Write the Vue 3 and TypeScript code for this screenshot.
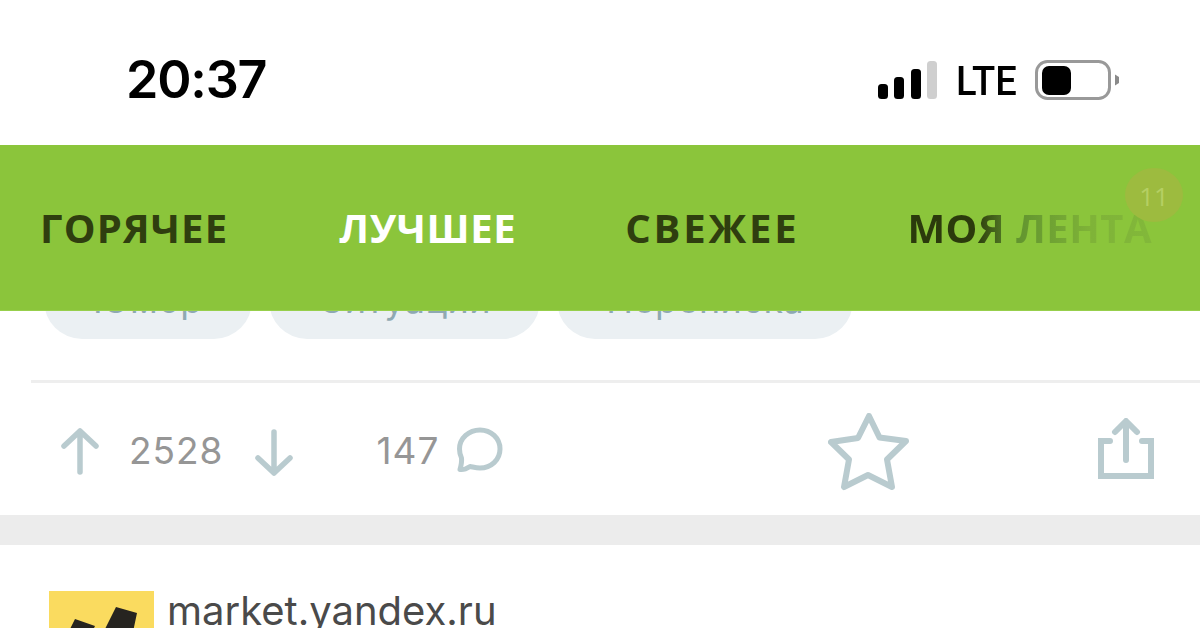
<script setup lang="ts">
const tabs: { label: string; cls: string }[] = [
  { label: 'ГОРЯЧЕЕ', cls: 'hot' },
  { label: 'ЛУЧШЕЕ', cls: 'active' },
  { label: 'СВЕЖЕЕ', cls: 'fresh' },
  { label: 'МОЯ ЛЕНТА', cls: 'fade' },
]
const tags: string[] = ['Юмор', 'Ситуации', 'Переписка']
</script>

<template>
  <div class="page">
    <header class="status">
      <span class="time">20:37</span>
      <div class="sys">
        <svg class="signal" width="60" height="38" viewBox="0 0 60 38">
          <rect x="0" y="23" width="10" height="15" rx="3.5" fill="#000" />
          <rect x="16" y="16" width="10" height="22" rx="3.5" fill="#000" />
          <rect x="33" y="8" width="10" height="30" rx="3.5" fill="#000" />
          <rect x="49" y="0" width="10" height="38" rx="3.5" fill="#cfcfcf" />
        </svg>
        <span class="lte">LTE</span>
        <svg class="battery" width="86" height="41" viewBox="0 0 86 41">
          <rect x="1.5" y="1.5" width="73" height="37" rx="11" fill="none" stroke="#999" stroke-width="3" />
          <rect x="7" y="6" width="29" height="29" rx="7" fill="#000" />
          <path d="M80 14.500 L84 17 V23 L80 25.500 Z" fill="#8a8a8a" />
        </svg>
      </div>
    </header>

    <nav class="tabs">
      <span v-for="t in tabs" :key="t.label" class="tab" :class="t.cls">{{ t.label }}</span>
      <span class="badge">11</span>
    </nav>

    <div class="tags">
      <span v-for="t in tags" :key="t" class="tag">{{ t }}</span>
    </div>

    <div class="actions">
      <div class="votes">
        <svg width="40" height="48" viewBox="0 0 40 48" fill="none" stroke="#b9cbcf" stroke-width="5.500" stroke-linecap="round" stroke-linejoin="round">
          <path d="M20 45 V4 M4 19 L20 4 L36 19" />
        </svg>
        <span class="count score">2528</span>
        <svg class="down" width="40" height="48" viewBox="0 0 40 48" fill="none" stroke="#b9cbcf" stroke-width="5.500" stroke-linecap="round" stroke-linejoin="round">
          <path d="M20 3 V44 M4 29 L20 44 L36 29" />
        </svg>
        <span class="count comments">147</span>
        <svg class="bubble" width="47" height="46" viewBox="0 0 47 46" fill="none" stroke="#b9cbcf" stroke-width="5" stroke-linecap="round" stroke-linejoin="round">
          <path d="M24 3 C35 3 44 11 44 22 C44 33 35 41 24 41 C20 41 17 40 14 39.500 C11 41.500 7 43 4 42.500 C5 39 6 35 5.500 31 C4 28 3.500 25 3.500 22 C3.500 11 13 3 24 3 Z" />
        </svg>
      </div>
      <div class="tools">
        <svg width="82" height="78" viewBox="0 0 82 78" fill="none" stroke="#b9cbcf" stroke-width="6" stroke-linejoin="round" stroke-linecap="round">
          <path d="M41 3 L51.500 24.500 L78 28 L59 46.500 L64 74 L40 62 L16 74 L21 46.500 L3 29 L30 25 Z" />
        </svg>
        <svg class="share" width="57" height="61" viewBox="0 0 57 61" fill="none" stroke="#b9cbcf" stroke-width="6">
          <path d="M12 23 H3 V58 H53 V23 H44" stroke-linecap="round" />
          <path d="M28 42 V4 M17 14 L28 3 L39 14" stroke-linecap="round" stroke-linejoin="round" />
        </svg>
      </div>
    </div>

    <div class="band"></div>

    <div class="source">
      <svg class="logo" width="105" height="105" viewBox="0 0 105 105">
        <rect width="105" height="105" fill="#fadb5f" />
        <path d="M26 28 L46 35 L34 60 L10 60 Z M67 16 L88 22 L80 60 L45 60 Z" fill="#262420" />
      </svg>
      <span class="domain">market.yandex.ru</span>
    </div>
  </div>
</template>

<style scoped>
.page {
  position: relative;
  width: 1200px;
  height: 628px;
  overflow: hidden;
  background: #fff;
  font-family: Inter, "Noto Sans", sans-serif;
}
.status {
  height: 145px;
  display: flex;
  justify-content: space-between;
  padding: 0 79px 0 126px;
  box-sizing: border-box;
  align-items: flex-start;
}
.time {
  margin-top: 49px;
  font-size: 52px;
  line-height: 62px;
  font-weight: 600;
  letter-spacing: -1.200px;
  color: #000;
}
.sys {
  display: flex;
  align-items: flex-start;
  margin-top: 60px;
}
.signal { margin-top: 1px; }
.lte {
  width: 59px;
  margin-left: 18px;
  font-family: Roboto, sans-serif;
  font-size: 41px;
  line-height: 42px;
  font-weight: 500;
  color: #000;
  transform: scaleX(0.93);
  transform-origin: left center;
  white-space: nowrap;
}
.battery { margin-left: 20px; }
.tabs {
  position: relative;
  z-index: 2;
  height: 166px;
  background: #8bc53b;
  border-bottom: 1px solid #97cf4c;
  display: flex;
  gap: 111px;
  align-items: center;
  padding: 0 0 0 40px;
  box-sizing: border-box;
  font-family: "Open Sans", sans-serif;
}
.tab {
  margin-top: 1px;
  font-size: 40px;
  line-height: 50px;
  font-weight: 700;
  letter-spacing: 0.800px;
  color: #2f3e0f;
  white-space: nowrap;
}
.tab.hot { letter-spacing: 1.200px; }
.tab.active { color: #fff; letter-spacing: 0.600px; }
.tab.fresh { letter-spacing: 2.800px; margin-left: -2px; }
.tab.fade {
  letter-spacing: 0.500px;
  margin-left: -3px;
  background: linear-gradient(90deg, #2b3a0c 0 28%, #62942f 45%, #7fb338 75%, #82b83a 100%);
  -webkit-background-clip: text;
  background-clip: text;
  color: transparent;
}
.badge {
  position: absolute;
  left: 1125px;
  top: 23px;
  width: 58px;
  height: 54px;
  border-radius: 50%;
  background: #9dbb3f;
  color: #b5cf63;
  font-size: 26px;
  line-height: 56px;
  text-align: center;
}
.tags {
  display: flex;
  gap: 17px;
  margin: -50px 0 0 44px;
}
.tag {
  height: 78px;
  padding: 0 49px;
  box-sizing: border-box;
  border-radius: 38px;
  background: #ebf0f3;
  color: #8fa9b2;
  font-size: 36px;
  line-height: 44px;
  letter-spacing: 0.500px;
  white-space: nowrap;
  display: flex;
  align-items: center;
}
.actions {
  margin: 41px 0 0 31px;
  height: 135px;
  box-sizing: border-box;
  border-top: 3px solid #eeeeee;
  display: flex;
  align-items: flex-start;
  justify-content: space-between;
}
.votes {
  display: flex;
  align-items: flex-start;
  padding: 44px 0 0 29px;
}
.count {
  font-size: 37px;
  line-height: 44px;
  color: #969696;
  letter-spacing: 1px;
}
.score { margin: 2px 30px 0 29px; }
.down { margin-top: 2px; }
.comments { margin: 2px 17px 0 83px; }
.tools {
  display: flex;
  align-items: flex-start;
  padding: 30px 45px 0 0;
}
.share { margin: 5px 0 0 188px; }
.band {
  height: 30px;
  background: #ececec;
}
.source {
  display: flex;
  align-items: flex-start;
  padding: 46px 0 0 49px;
}
.logo { flex: none; }
.domain {
  margin: -4px 0 0 13px;
  font-size: 40px;
  line-height: 48px;
  color: #4a4a4a;
}
</style>

<style>
body { margin: 0; }
</style>
